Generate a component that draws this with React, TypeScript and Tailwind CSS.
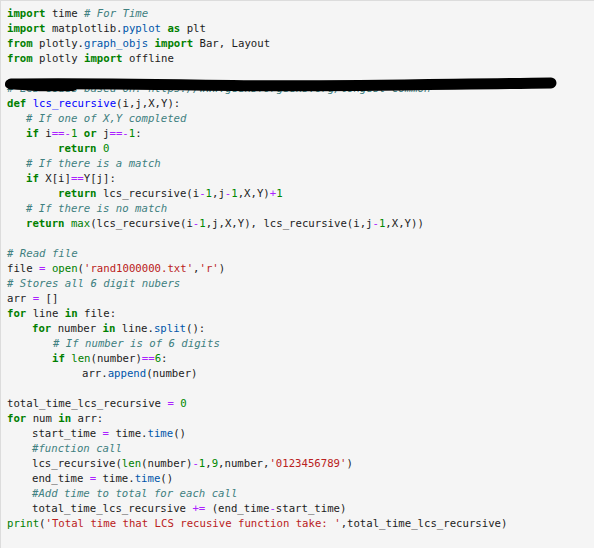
import React from 'react'

type Tok = [string, string]

// token styles, classic notebook palette
const styles: Record<string, string> = {
  t: 'text-[#1c1c1c]',
  k: 'text-[#008000] font-bold',
  b: 'text-[#008000]',
  c: 'text-[#408080] italic',
  s: 'text-[#ba2121]',
  n: 'text-[#008800]',
  o: 'text-[#aa22ff]',
  d: 'text-[#0000ff]',
  p: 'text-[#0055aa]',
}

const lines: { indent: string; toks: Tok[]; redacted?: boolean }[] = [
  { indent: '', toks: [['k', 'import'], ['t', ' time '], ['c', '# For Time']] },
  { indent: '', toks: [['k', 'import'], ['t', ' matplotlib.'], ['p', 'pyplot'], ['t', ' '], ['k', 'as'], ['t', ' plt']] },
  { indent: '', toks: [['k', 'from'], ['t', ' plotly.'], ['p', 'graph_objs'], ['t', ' '], ['k', 'import'], ['t', ' Bar, Layout']] },
  { indent: '', toks: [['k', 'from'], ['t', ' plotly '], ['k', 'import'], ['t', ' offline']] },
  { indent: '', toks: [] },
  { indent: '', toks: [['c', '# LCS codes based on: https://www.geeksforgeeks.org/longest-common']], redacted: true },
  { indent: '', toks: [['k', 'def'], ['t', ' '], ['d', 'lcs_recursive'], ['t', '(i,j,X,Y):']] },
  { indent: 'pl-[19px]', toks: [['c', '# If one of X,Y completed']] },
  { indent: 'pl-[19px]', toks: [['k', 'if'], ['t', ' i'], ['o', '==-'], ['n', '1'], ['t', ' '], ['k', 'or'], ['t', ' j'], ['o', '==-'], ['n', '1'], ['t', ':']] },
  { indent: 'pl-[51px]', toks: [['k', 'return'], ['t', ' '], ['n', '0']] },
  { indent: 'pl-[19px]', toks: [['c', '# If there is a match']] },
  { indent: 'pl-[19px]', toks: [['k', 'if'], ['t', ' X[i]'], ['o', '=='], ['t', 'Y[j]:']] },
  { indent: 'pl-[51px]', toks: [['k', 'return'], ['t', ' lcs_recursive(i'], ['o', '-'], ['n', '1'], ['t', ',j'], ['o', '-'], ['n', '1'], ['t', ',X,Y)'], ['o', '+'], ['n', '1']] },
  { indent: 'pl-[19px]', toks: [['c', '# If there is no match']] },
  { indent: 'pl-[19px]', toks: [['k', 'return'], ['t', ' '], ['b', 'max'], ['t', '(lcs_recursive(i'], ['o', '-'], ['n', '1'], ['t', ',j,X,Y), lcs_recursive(i,j'], ['o', '-'], ['n', '1'], ['t', ',X,Y))']] },
  { indent: '', toks: [] },
  { indent: '', toks: [['c', '# Read file']] },
  { indent: '', toks: [['t', 'file '], ['o', '='], ['t', ' '], ['b', 'open'], ['t', '('], ['s', "'rand1000000.txt'"], ['t', ','], ['s', "'r'"], ['t', ')']] },
  { indent: '', toks: [['c', '# Stores all 6 digit nubers']] },
  { indent: '', toks: [['t', 'arr '], ['o', '='], ['t', ' []']] },
  { indent: '', toks: [['k', 'for'], ['t', ' line '], ['k', 'in'], ['t', ' file:']] },
  { indent: 'pl-[25px]', toks: [['k', 'for'], ['t', ' number '], ['k', 'in'], ['t', ' line.'], ['p', 'split'], ['t', '():']] },
  { indent: 'pl-[46px]', toks: [['c', '# If number is of 6 digits']] },
  { indent: 'pl-[45px]', toks: [['k', 'if'], ['t', ' '], ['b', 'len'], ['t', '(number)'], ['o', '=='], ['n', '6'], ['t', ':']] },
  { indent: 'pl-[75px]', toks: [['t', 'arr.'], ['p', 'append'], ['t', '(number)']] },
  { indent: '', toks: [] },
  { indent: '', toks: [['t', 'total_time_lcs_recursive '], ['o', '='], ['t', ' '], ['n', '0']] },
  { indent: '', toks: [['k', 'for'], ['t', ' num '], ['k', 'in'], ['t', ' arr:']] },
  { indent: 'pl-[25px]', toks: [['t', 'start_time '], ['o', '='], ['t', ' time.'], ['p', 'time'], ['t', '()']] },
  { indent: 'pl-[25px]', toks: [['c', '#function call']] },
  { indent: 'pl-[25px]', toks: [['t', 'lcs_recursive('], ['b', 'len'], ['t', '(number)'], ['o', '-'], ['n', '1'], ['t', ','], ['n', '9'], ['t', ',number,'], ['s', "'0123456789'"], ['t', ')']] },
  { indent: 'pl-[25px]', toks: [['t', 'end_time '], ['o', '='], ['t', ' time.'], ['p', 'time'], ['t', '()']] },
  { indent: 'pl-[25px]', toks: [['c', '#Add time to total for each call']] },
  { indent: 'pl-[25px]', toks: [['t', 'total_time_lcs_recursive '], ['o', '+='], ['t', ' (end_time'], ['o', '-'], ['t', 'start_time)']] },
  { indent: '', toks: [['b', 'print'], ['t', '('], ['s', "'Total time that LCS recusive function take: '"], ['t', ',total_time_lcs_recursive)']] },
]

const App = () => {
  return (
    <div className="w-[594px] h-[548px] overflow-hidden bg-white">
      <div className="w-[620px] h-[560px] bg-[#f5f5f5] border-l border-t border-[#dcdcdc] pl-[6px] pt-[5px] font-['DejaVu_Sans_Mono',monospace] text-[10.67px] leading-[15px]">
        {lines.map((line, i) => (
          <div key={i} className={`relative h-[15px] whitespace-pre ${line.indent}`}>
            {line.toks.map(([kind, text], j) => (
              <span key={j} className={styles[kind]}>
                {text}
              </span>
            ))}
            {/* marker scribble hiding the source link */}
            {line.redacted && (
              <svg className="absolute left-[-4px] top-[-5px] w-[556px] h-[20px]" viewBox="0 0 556 20">
                <path
                  d="M8 8 C 60 7, 140 8, 230 9.5 S 420 8.5, 548 7"
                  stroke="#000"
                  strokeWidth="11"
                  strokeLinecap="round"
                  fill="none"
                />
                <path d="M6 8 C 20 11, 40 12, 70 11" stroke="#000" strokeWidth="8" strokeLinecap="round" fill="none" />
              </svg>
            )}
          </div>
        ))}
      </div>
    </div>
  )
}

export default App
